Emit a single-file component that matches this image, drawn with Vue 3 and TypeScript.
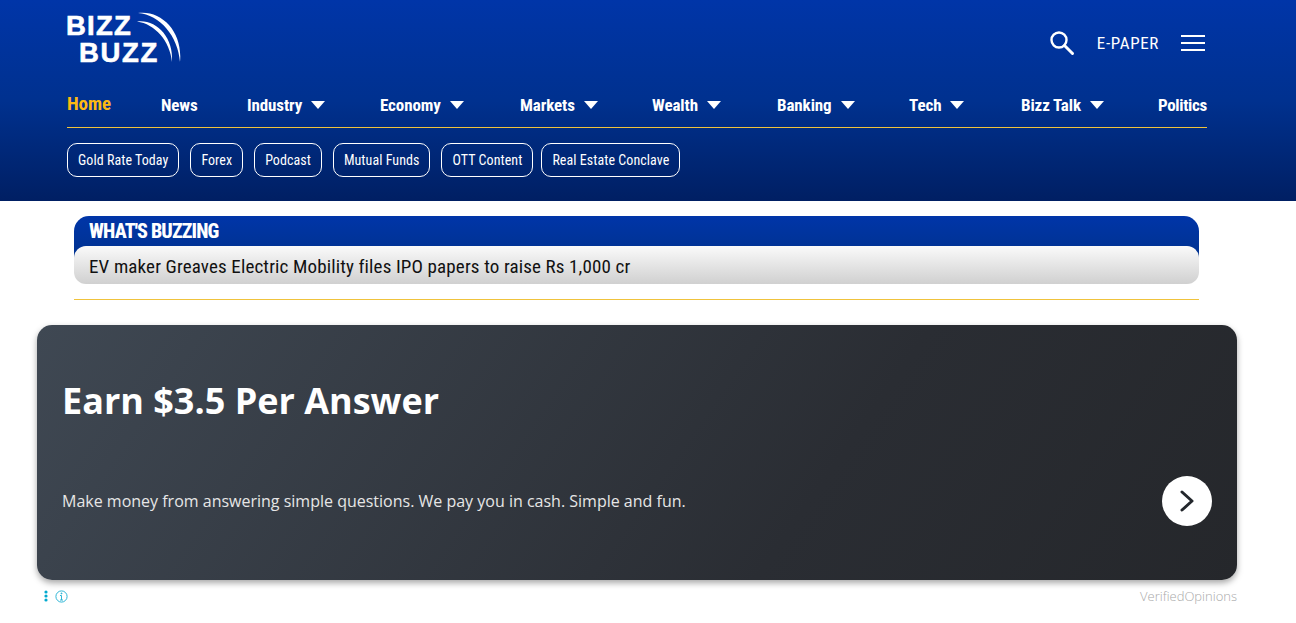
<script setup lang="ts">
interface NavItem {
  label: string;
  caret?: boolean;
}

const navItems: NavItem[] = [
  { label: "News" },
  { label: "Industry", caret: true },
  { label: "Economy", caret: true },
  { label: "Markets", caret: true },
  { label: "Wealth", caret: true },
  { label: "Banking", caret: true },
  { label: "Tech", caret: true },
  { label: "Bizz Talk", caret: true },
  { label: "Politics" },
];

const chips = [
  "Gold Rate Today",
  "Forex",
  "Podcast",
  "Mutual Funds",
  "OTT Content",
  "Real Estate Conclave",
];
</script>

<template>
  <header class="site-header">
    <div class="top-row">
      <a class="logo">
        <span class="logo-line">BIZZ</span>
        <span class="logo-line logo-second">BUZZ</span>
        <svg class="logo-arcs" width="50" height="54" viewBox="0 0 50 54" fill="#fff">
          <path d="M4 1C28 -2 49 20 46 50C44 24 26 3 4 1Z" />
          <path d="M3 9.5C22 7 40 25 38 50C36 29 21 12 3 9.5Z" />
        </svg>
      </a>
      <div class="tools">
        <svg width="26" height="26" viewBox="0 0 26 26" fill="none" stroke="#fff">
          <circle cx="10" cy="10" r="7.5" stroke-width="2.4" />
          <path d="M15.5 15.5L23.5 23.5" stroke-width="3" stroke-linecap="round" />
        </svg>
        <span class="epaper">E-PAPER</span>
        <div class="burger"><i></i><i></i><i></i></div>
      </div>
    </div>

    <nav class="nav">
      <a class="nav-item home">Home</a>
      <a v-for="item in navItems" :key="item.label" class="nav-item">
        {{ item.label }}
        <span v-if="item.caret" class="caret"></span>
      </a>
    </nav>

    <div class="chips">
      <a v-for="chip in chips" :key="chip" class="chip">{{ chip }}</a>
    </div>
  </header>

  <section class="buzzing">
    <h2 class="buzz-title">WHAT'S BUZZING</h2>
    <div class="buzz-text">EV maker Greaves Electric Mobility files IPO papers to raise Rs 1,000 cr</div>
  </section>

  <section class="ad">
    <div class="ad-card">
      <h3>Earn $3.5 Per Answer</h3>
      <p>Make money from answering simple questions. We pay you in cash. Simple and fun.</p>
      <span class="ad-next">
        <svg width="16" height="24" viewBox="0 0 16 24" fill="none">
          <path d="M3 3L13 12L3 21" stroke="#23272c" stroke-width="3" stroke-linecap="round" stroke-linejoin="round" />
        </svg>
      </span>
    </div>
    <div class="ad-foot">
      <div class="ad-icons">
        <svg width="4" height="12" viewBox="0 0 4 12" fill="#00a9cf">
          <circle cx="2" cy="2" r="1.6" />
          <circle cx="2" cy="6" r="1.6" />
          <circle cx="2" cy="10" r="1.6" />
        </svg>
        <svg width="13" height="13" viewBox="0 0 13 13" fill="none" stroke="#2fb6d6">
          <circle cx="6.5" cy="6.5" r="5.6" />
          <path d="M6.5 5.5V10M5 10H8M5 5.5H6.5" />
          <circle cx="6.5" cy="3.4" r=".5" fill="#2fb6d6" />
        </svg>
      </div>
      <span class="ad-brand">VerifiedOpinions</span>
    </div>
  </section>
</template>

<style>
body {
  background: #fff;
}
</style>

<style scoped>
.site-header {
  height: 201px;
  box-sizing: border-box;
  padding: 12px 89px 0 67px;
  background: linear-gradient(#0035a8 0%, #00318f 50%, #001f63 100%);
  color: #fff;
  font-family: Roboto, sans-serif;
  font-stretch: 75%;
}

.top-row {
  display: flex;
  justify-content: space-between;
  height: 70px;
}

.logo {
  position: relative;
  display: block;
  width: 116px;
  height: 50px;
  margin-left: -1px;
  font-family: "Liberation Sans", sans-serif;
  font-weight: 700;
  font-stretch: normal;
  font-size: 27.5px;
  line-height: 27px;
  letter-spacing: 1.2px;
  -webkit-text-stroke: 0.6px #fff;
}

.logo-line {
  display: block;
}

.logo-second {
  padding-left: 13px;
  letter-spacing: 1.7px;
}

.logo-arcs {
  position: absolute;
  left: 68px;
  top: 0;
}

.tools {
  display: flex;
  align-items: center;
  height: 62px;
  gap: 22px;
  margin-right: 2px;
}

.epaper {
  font-size: 17px;
  letter-spacing: 0.65px;
}

.burger {
  display: flex;
  flex-direction: column;
  gap: 5px;
  width: 24px;
}

.burger i {
  display: block;
  height: 2px;
  background: #fff;
}

.nav {
  display: grid;
  grid-template-columns: 94px 86px 133px 140px 132px 125px 132px 112px 137px 1fr;
  align-items: center;
  height: 45px;
  border-bottom: 1px solid #f0c33c;
}

.nav-item {
  display: flex;
  align-items: center;
  gap: 9px;
  font-size: 17px;
  font-weight: 700;
  letter-spacing: -0.1px;
}

.nav-item:last-child {
  letter-spacing: -0.35px;
}

.home {
  color: #fdb913;
  font-size: 19px;
  margin-top: -3px;
}

.caret {
  width: 0;
  height: 0;
  border-left: 7.5px solid transparent;
  border-right: 7.5px solid transparent;
  border-top: 8px solid #fff;
}

.chips {
  display: flex;
  gap: 11px;
  margin-top: 15px;
}

.chip {
  height: 34px;
  box-sizing: border-box;
  padding: 0 10px;
  border: 1px solid #fff;
  border-radius: 10px;
  font-size: 14px;
  letter-spacing: 0.06px;
  line-height: 33px;
}

.chip:last-child {
  margin-left: -3px;
}

.buzzing {
  margin: 15px 97px 0 74px;
  padding-bottom: 15px;
  border-bottom: 1px solid #f0c33c;
  font-family: Roboto, sans-serif;
  font-stretch: 75%;
}

.buzz-title {
  margin: 0;
  height: 42px;
  box-sizing: border-box;
  margin-bottom: -12px;
  padding: 3px 15px 0;
  border-radius: 15px 15px 0 0;
  background: linear-gradient(#0035a8, #00328f);
  color: #fff;
  font-size: 20px;
  letter-spacing: -0.85px;
  line-height: 24px;
  font-weight: 800;
}

.buzz-text {
  position: relative;
  height: 38px;
  padding: 0 15px;
  border-radius: 12px;
  background: linear-gradient(#fafafa, #d0d0d0);
  color: #111;
  font-size: 19px;
  letter-spacing: 0.14px;
  line-height: 41px;
}

.ad {
  margin: 25px 59px 0 37px;
  font-family: "Open Sans", sans-serif;
}

.ad-card {
  position: relative;
  height: 255px;
  box-sizing: border-box;
  padding: 53px 25px 0;
  border-radius: 15px;
  background: linear-gradient(125deg, #3f4853 0%, #2a2d33 65%, #25272b 100%);
  box-shadow: 0 3px 6px rgba(0, 0, 0, 0.35);
  color: #fff;
}

.ad-card h3 {
  margin: 0;
  font-size: 36px;
  line-height: 46px;
  font-weight: 700;
}

.ad-card p {
  margin: 66px 0 0;
  font-size: 16px;
  line-height: 22px;
  color: #e6e6e6;
}

.ad-next {
  position: absolute;
  right: 25px;
  top: 151px;
  display: flex;
  align-items: center;
  justify-content: center;
  width: 50px;
  height: 50px;
  border-radius: 50%;
  background: #fff;
}

.ad-foot {
  display: flex;
  justify-content: space-between;
  align-items: center;
  height: 32px;
  padding-left: 7px;
}

.ad-icons {
  display: flex;
  align-items: center;
  gap: 7px;
}

.ad-brand {
  font-size: 13px;
  font-weight: 300;
  color: #a9a9a9;
}
</style>
